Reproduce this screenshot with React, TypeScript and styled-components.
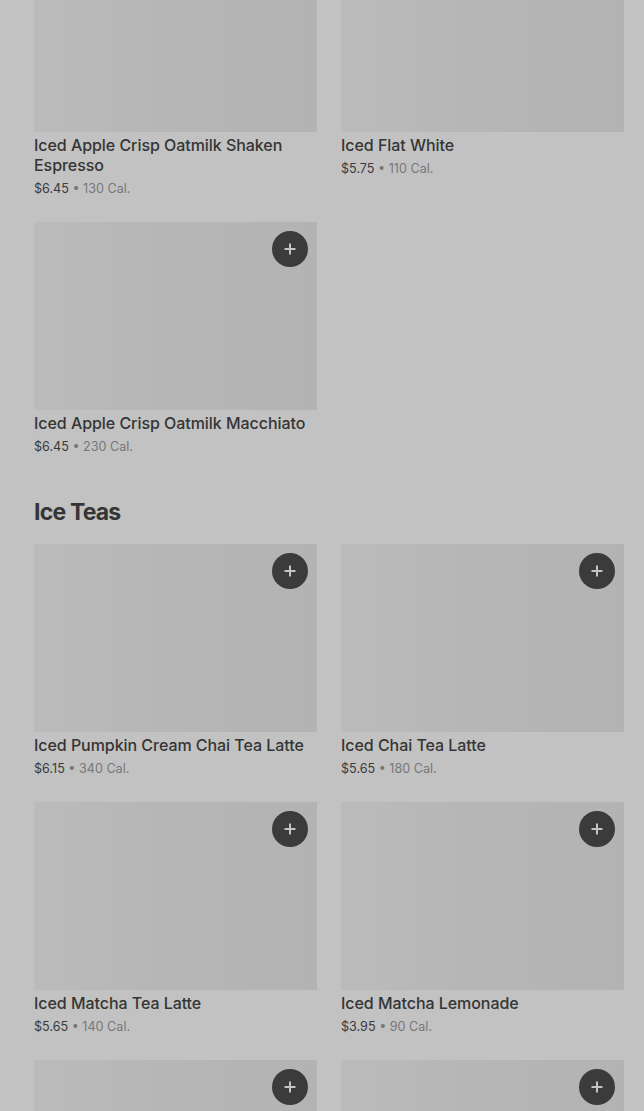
import React from "react";
import styled, { createGlobalStyle } from "styled-components";

type Item = { name: string; price: string; cal: string; button?: boolean };

const topItems: Item[] = [
  { name: "Iced Apple Crisp Oatmilk Shaken Espresso", price: "$6.45", cal: "130 Cal." },
  { name: "Iced Flat White", price: "$5.75", cal: "110 Cal." },
  { name: "Iced Apple Crisp Oatmilk Macchiato", price: "$6.45", cal: "230 Cal.", button: true },
];

const teas: Item[] = [
  { name: "Iced Pumpkin Cream Chai Tea Latte", price: "$6.15", cal: "340 Cal.", button: true },
  { name: "Iced Chai Tea Latte", price: "$5.65", cal: "180 Cal.", button: true },
  { name: "Iced Matcha Tea Latte", price: "$5.65", cal: "140 Cal.", button: true },
  { name: "Iced Matcha Lemonade", price: "$3.95", cal: "90 Cal.", button: true },
  { name: "", price: "", cal: "", button: true },
  { name: "", price: "", cal: "", button: true },
];

const Global = createGlobalStyle`
  body {
    margin: 0;
    background: #c2c2c2;
    font-family: Inter, "Noto Sans", sans-serif;
    overflow: hidden;
  }
`;

const Page = styled.div`
  padding: 0 20px 0 34px;
  margin-top: -56px;
`;

const Grid = styled.div`
  display: grid;
  grid-template-columns: 283px 283px;
  column-gap: 24px;
  row-gap: 23px;
`;

const Card = styled.div`
  display: flex;
  flex-direction: column;
`;

const Thumb = styled.div`
  position: relative;
  height: 188px;
  background: linear-gradient(90deg, #bbbbbb 0%, #b6b6b6 45%, #b3b3b3 100%);
`;

const AddButton = styled.div`
  position: absolute;
  top: 9px;
  right: 9px;
  width: 36px;
  height: 36px;
  border-radius: 50%;
  background: #3b3b3b;
  display: flex;
  align-items: center;
  justify-content: center;
`;

const Name = styled.div`
  margin-top: 3px;
  font-size: 16px;
  line-height: 20px;
  font-weight: 500;
  color: #353535;
  letter-spacing: -0.05px;
`;

const Meta = styled.div`
  margin-top: 4px;
  font-size: 12.6px;
  line-height: 20px;
  color: #3a3a3a;
`;

const Cal = styled.span`
  color: #777777;
`;

const Heading = styled.h2`
  margin: 39px 0 16px;
  font-size: 23px;
  line-height: 32px;
  font-weight: 700;
  color: #353535;
  letter-spacing: -0.8px;
`;

const Plus = () => (
  <svg width="14" height="14" viewBox="0 0 14 14">
    <path d="M7 1.5v11M1.5 7h11" stroke="#c4c4c4" strokeWidth="2" />
  </svg>
);

const ItemCard = ({ item }: { item: Item }) => (
  <Card>
    <Thumb>
      {item.button && (
        <AddButton>
          <Plus />
        </AddButton>
      )}
    </Thumb>
    {item.name && (
      <>
        <Name>{item.name}</Name>
        <Meta>
          {item.price} <Cal>• {item.cal}</Cal>
        </Meta>
      </>
    )}
  </Card>
);

export default function App() {
  return (
    <>
      <Global />
      <Page>
        <Grid>
          {topItems.map((it, i) => (
            <ItemCard key={i} item={it} />
          ))}
        </Grid>
        <Heading>Ice Teas</Heading>
        <Grid>
          {teas.map((it, i) => (
            <ItemCard key={i} item={it} />
          ))}
        </Grid>
      </Page>
    </>
  );
}
